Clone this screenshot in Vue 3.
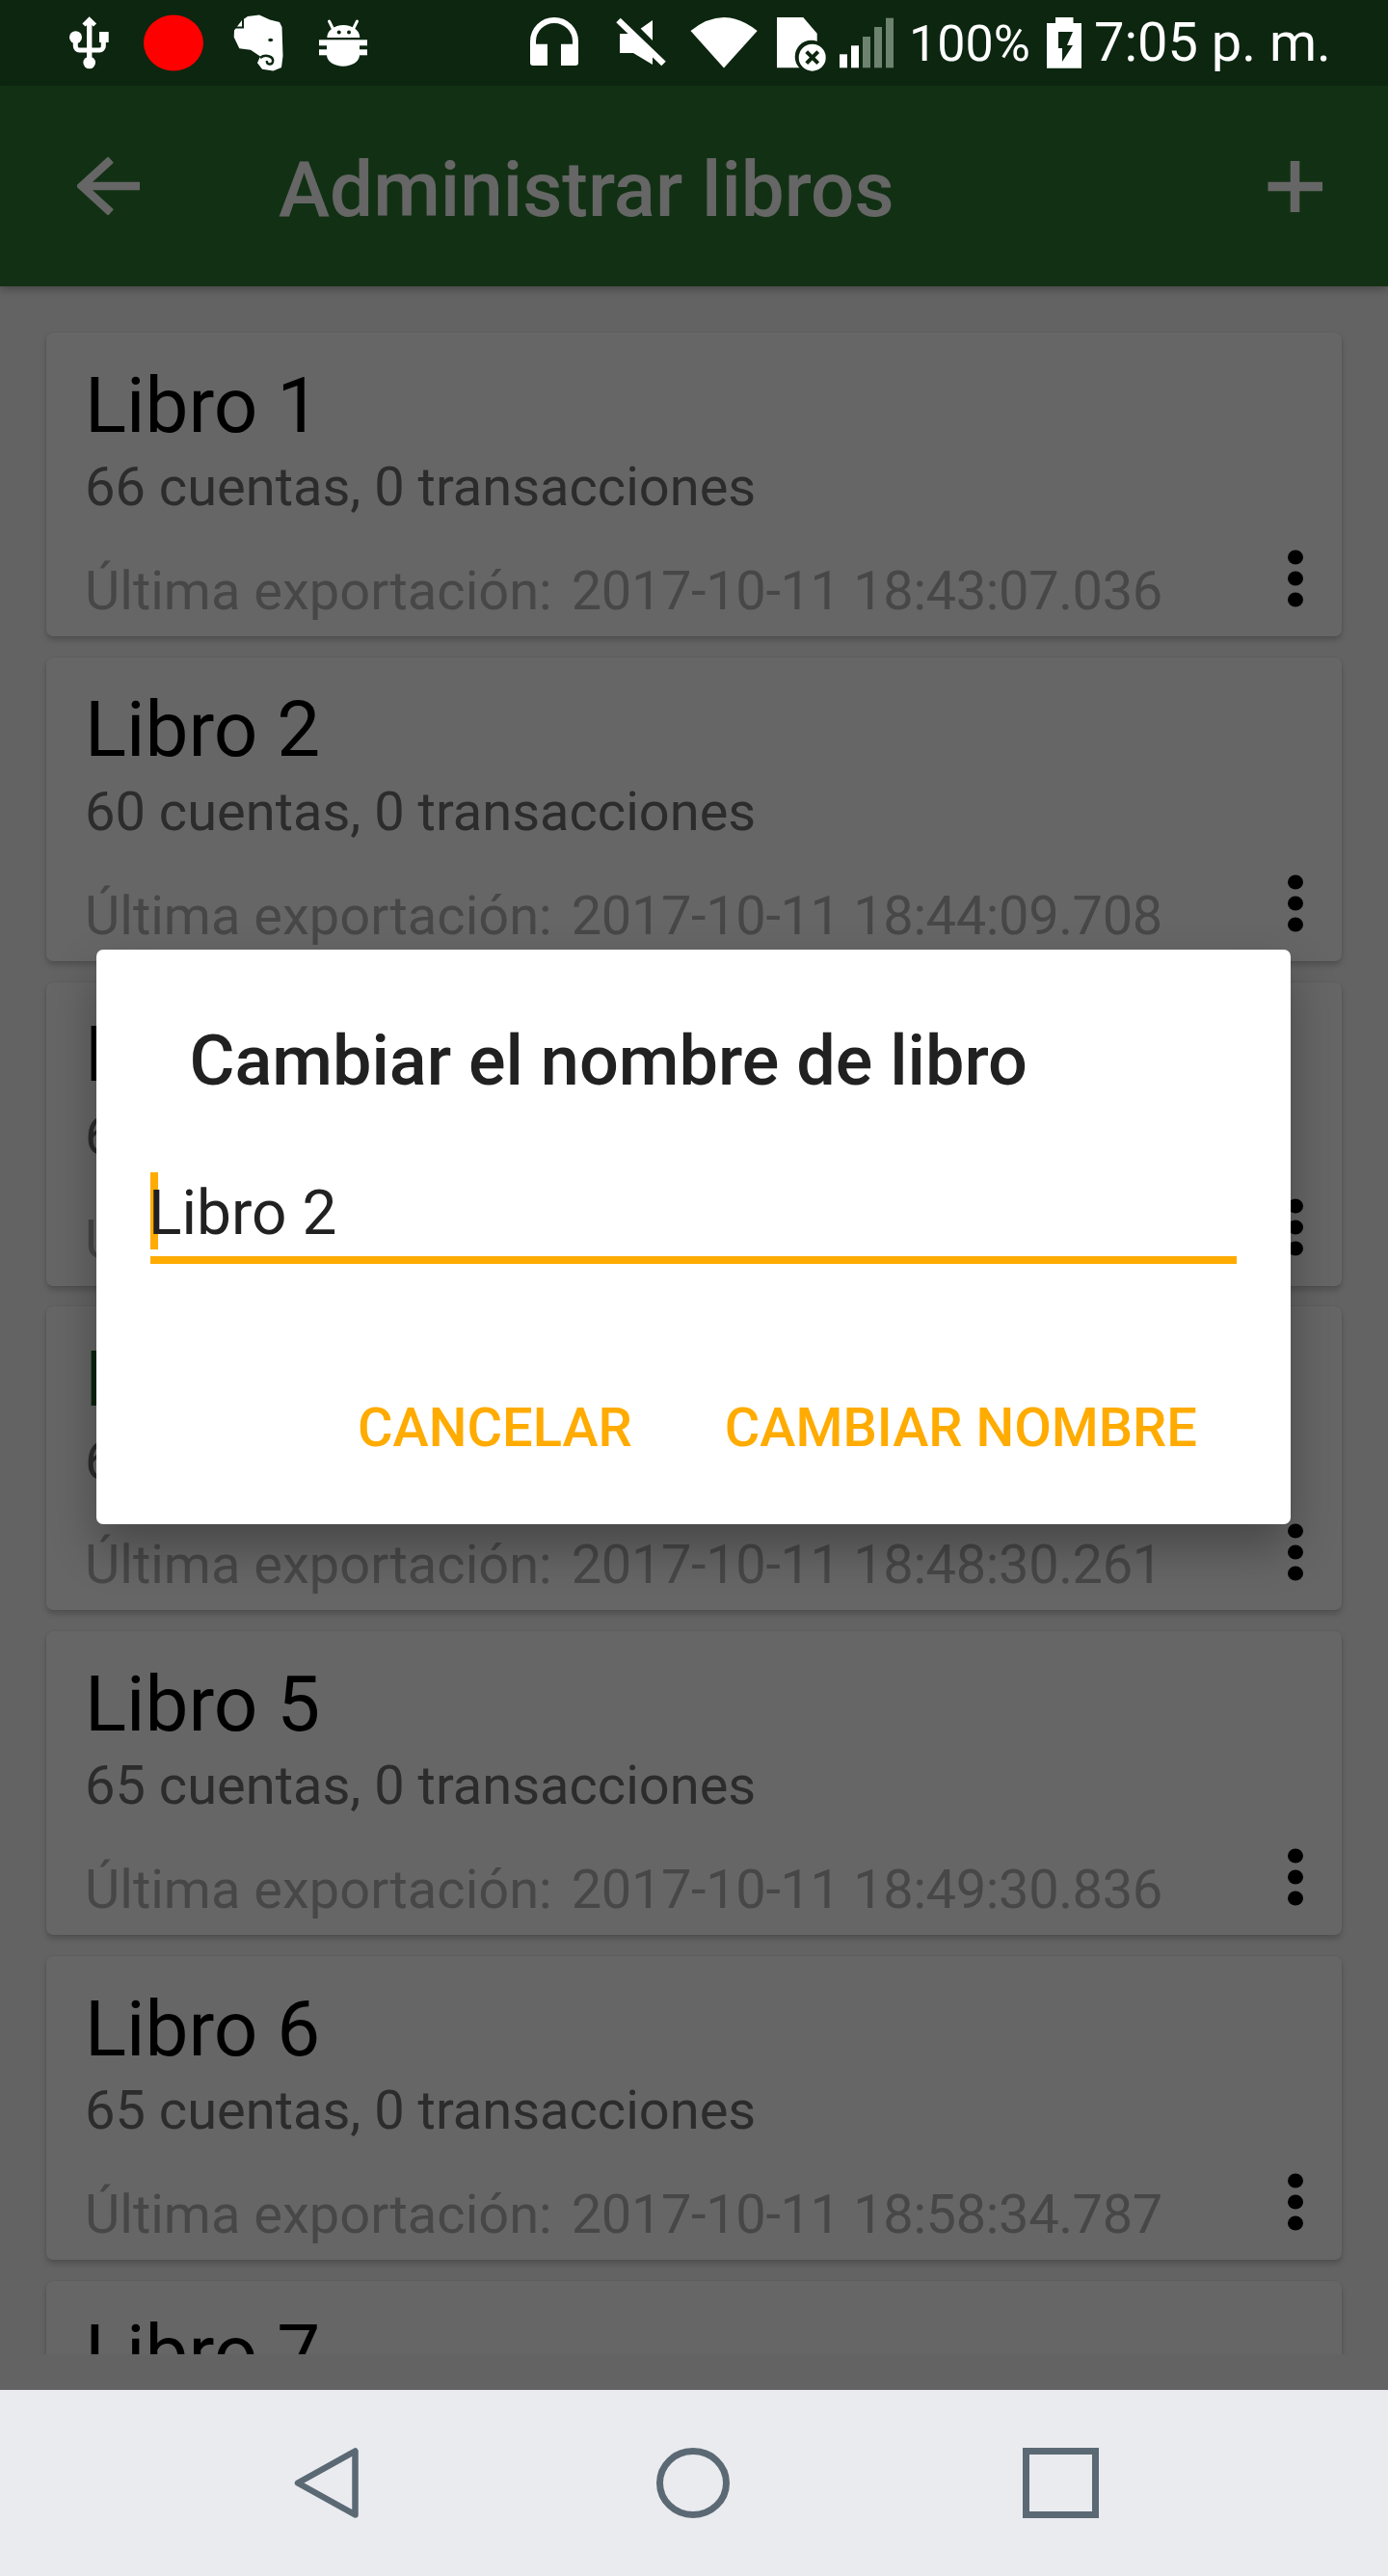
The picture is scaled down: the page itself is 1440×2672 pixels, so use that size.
<template>
  <div class="phone">
    <!-- Status bar -->
    <div class="status-bar">
      <div class="status-left">
        <svg class="usb" width="41" height="89" viewBox="72 0 41 89">
          <path d="M87 26l5.700-5.700 5.800 5.700" fill="none" stroke="#fff" stroke-width="4.500" />
          <rect x="90" y="20" width="5.400" height="40" fill="#fff" />
          <path d="M78.300 40v8a4 4 0 0 0 4 4h21a4 4 0 0 0 4-4v-6" fill="none" stroke="#fff" stroke-width="5" />
          <circle cx="78.500" cy="38.700" r="6.500" fill="#fff" />
          <rect x="103" y="33" width="9.700" height="11" fill="#fff" />
          <circle cx="92.700" cy="65" r="6.300" fill="#fff" />
        </svg>
        <svg class="rec" width="62" height="89" viewBox="149 0 62 89">
          <ellipse cx="180" cy="44.500" rx="31" ry="29" fill="#f00" />
        </svg>
        <svg class="evernote" width="52" height="89" viewBox="242 0 52 89">
          <path d="M251 21l6-4 12-1.500 11 5 10 2.500 2.500 5 1 30-1.500 12-8.500 3.500-11.500-1.700-5-6.600 3-6.700-10-6.700-11.700-1.600-5.600-11.700.3-7z" fill="#fff" />
          <path d="M252 20v8.500h-8" fill="none" stroke="#0c2610" stroke-width="2" />
          <ellipse cx="280.700" cy="41.500" rx="2.500" ry="1.800" fill="#0c2610" />
          <path d="M270 60c5-4 14-2 13 4-1 4-7 3-6-1" fill="none" stroke="#0c2610" stroke-width="2.500" />
        </svg>
        <svg class="android" width="50" height="89" viewBox="331 0 50 89">
          <path d="M339.300 39a17 13 0 0 1 34 0z" fill="#fff" />
          <path d="M345 29l-3.500-7M367 29l3.500-7" stroke="#fff" stroke-width="3" stroke-linecap="round" />
          <circle cx="351.700" cy="33.500" r="2" fill="#0c2610" />
          <circle cx="362" cy="33.500" r="2" fill="#0c2610" />
          <rect x="331" y="41.300" width="50" height="6" fill="#fff" />
          <rect x="331" y="51.300" width="50" height="6" fill="#fff" />
          <path d="M339 47h34v10c0 7-8 11.700-17 11.700S339 64 339 57z" fill="#fff" />
        </svg>
      </div>
      <div class="status-right">
        <svg class="headphones" width="50" height="89" viewBox="550 0 50 89">
          <path d="M553 52v-9a22 22 0 0 1 44 0v9" fill="none" stroke="#fff" stroke-width="6" />
          <path d="M550 45.700h18V68h-15a3 3 0 0 1-3-3zM582 45.700h18V65a3 3 0 0 1-3 3h-15z" fill="#fff" />
        </svg>
        <svg class="mute" width="52" height="89" viewBox="639 0 52 89">
          <path d="M643 35h14l20-14v46l-20-12h-14z" fill="#fff" />
          <path d="M643 19l47 47" stroke="#0c2610" stroke-width="7" transform="translate(3 -3)" />
          <path d="M641.500 21l47 45" stroke="#fff" stroke-width="6.500" />
        </svg>
        <svg class="wifi" width="70" height="89" viewBox="716 0 70 89">
          <path d="M751 70.500L716.500 32Q751 4 785.700 32z" fill="#fff" />
        </svg>
        <svg class="sim" width="52" height="89" viewBox="806 0 52 89">
          <path d="M806 18h27.300l14.400 16.700v35.600H806z" fill="#fff" />
          <circle cx="841.700" cy="58.700" r="17" fill="#0c2610" />
          <circle cx="842.700" cy="59.700" r="14" fill="#fff" />
          <path d="M836.700 53.700l12 12m0-12l-12 12" stroke="#0c2610" stroke-width="4" />
        </svg>
        <svg class="signal" width="56" height="89" viewBox="871 0 56 89">
          <rect x="871" y="56.300" width="8" height="14" fill="#fff" />
          <rect x="883" y="47.300" width="8" height="23" fill="#fff" />
          <rect x="895" y="38" width="8" height="32.300" fill="#6e8270" />
          <rect x="907" y="28" width="8" height="42.300" fill="#6e8270" />
          <rect x="919" y="18.700" width="8" height="51.600" fill="#6e8270" />
        </svg>
        <span class="battery-text">100%</span>
        <svg class="battery" width="36" height="89" viewBox="1086 0 36 89">
          <path d="M1095 18h18.500v6h8.500v46.700h-36V24h9z" fill="#fff" />
          <path d="M1098 33h15l-6 14h6l-11 17V50h-4z" fill="#0c2610" />
        </svg>
        <span class="clock">7:05 p. m.</span>
      </div>
    </div>

    <!-- App bar -->
    <header class="app-bar">
      <svg class="back" width="66" height="60" viewBox="80 163 66 60">
        <path d="M145 193H86M115 165.500L85 193l30 27.500" fill="none" stroke="#fff" stroke-width="8.500" />
      </svg>
      <span class="app-title">Administrar libros</span>
      <svg class="add" width="57" height="53" viewBox="1315 166.500 57 53">
        <path d="M1343.500 166.500v53M1315.500 193h56.500" fill="none" stroke="#fff" stroke-width="9.500" />
      </svg>
    </header>

    <!-- Book list -->
    <main class="book-list">
      <article v-for="book in books" :key="book.name" class="book-card">
        <h2 class="book-name" :class="{ active: book.active }">{{ book.name }}</h2>
        <p class="book-stats">{{ book.accounts }} cuentas, 0 transacciones</p>
        <div class="book-footer">
          <span class="book-export">
            <span>Última exportación:</span>
            <span class="book-date">{{ book.exported }}</span>
          </span>
          <svg class="kebab" width="16" height="60" viewBox="0 0 16 60">
            <ellipse cx="8" cy="8" rx="8" ry="7.500" />
            <ellipse cx="8" cy="30" rx="8" ry="7.500" />
            <ellipse cx="8" cy="52" rx="8" ry="7.500" />
          </svg>
        </div>
      </article>
    </main>

    <div class="list-gap"></div>

    <!-- Navigation bar -->
    <nav class="nav-bar">
      <svg class="nav-back" width="67" height="73" viewBox="0 0 67 73">
        <path d="M63.500 3.500v66L4 36.500z" fill="none" stroke="#5b6974" stroke-width="6.500" stroke-linejoin="round" />
      </svg>
      <svg class="nav-home" width="76" height="73" viewBox="0 0 76 73">
        <ellipse cx="38" cy="36.500" rx="34.500" ry="33" fill="none" stroke="#5b6974" stroke-width="7" />
      </svg>
      <svg class="nav-recent" width="79" height="73" viewBox="0 0 79 73">
        <rect x="3.500" y="3.500" width="72" height="66" fill="none" stroke="#5b6974" stroke-width="7" />
      </svg>
    </nav>

    <!-- Rename dialog -->
    <div class="scrim">
      <div class="dialog">
        <h3 class="dialog-title">Cambiar el nombre de libro</h3>
        <div class="dialog-input">
          <span class="caret"></span>
          <span class="input-value">Libro 2</span>
        </div>
        <div class="dialog-actions">
          <span class="action">CANCELAR</span>
          <span class="action">CAMBIAR NOMBRE</span>
        </div>
      </div>
    </div>
  </div>
</template>

<script setup>
// Books shown behind the dialog
const books = [
  { name: 'Libro 1', accounts: 66, exported: '2017-10-11 18:43:07.036' },
  { name: 'Libro 2', accounts: 60, exported: '2017-10-11 18:44:09.708' },
  { name: 'Libro 3', accounts: 64, exported: '2017-10-11 18:46:12.402' },
  { name: 'Libro 4', accounts: 65, exported: '2017-10-11 18:48:30.261', active: true },
  { name: 'Libro 5', accounts: 65, exported: '2017-10-11 18:49:30.836' },
  { name: 'Libro 6', accounts: 65, exported: '2017-10-11 18:58:34.787' },
  { name: 'Libro 7', accounts: 65, exported: '2017-10-11 19:01:12.118' },
];
</script>

<style>
body {
  background: #fff;
}
</style>

<style scoped>
.phone {
  position: relative;
  width: 1440px;
  height: 2672px;
  display: flex;
  flex-direction: column;
  overflow: hidden;
  background: #f8f8f8;
  font-family: Roboto, "Liberation Sans", sans-serif;
}

.status-bar {
  height: 89px;
  flex: none;
  display: flex;
  padding-left: 72px;
  box-sizing: border-box;
  background: #0c2610;
  color: #fff;
}

.status-left,
.status-right {
  display: flex;
  align-items: flex-start;
}

.status-right {
  margin-left: 169px;
}

.rec {
  margin-left: 36px;
}
.evernote {
  margin-left: 31px;
}
.android {
  margin-left: 37px;
}
.mute {
  margin-left: 39px;
}
.wifi {
  margin-left: 25px;
}
.sim {
  margin-left: 20px;
}
.signal {
  margin-left: 13px;
}
.battery-text {
  margin-left: 16px;
  width: 143px;
  font-size: 52px;
  line-height: 89px;
  position: relative;
  top: 1px;
}
.battery {
  flex: none;
}
.clock {
  margin-left: 13px;
  font-size: 56px;
  line-height: 89px;
  white-space: nowrap;
}

.app-bar {
  position: relative;
  z-index: 1;
  height: 208px;
  flex: none;
  display: flex;
  align-items: center;
  padding: 0 68px 0 80px;
  box-sizing: border-box;
  background: #2e7a32;
  box-shadow: 0 4px 8px rgba(0, 0, 0, 0.25);
  color: #fff;
}

.back {
  flex: none;
}

.app-title {
  margin-left: 143px;
  padding-top: 8px;
  flex: 1;
  font-size: 80px;
  font-weight: 500;
}

.book-list {
  height: 2145px;
  flex: none;
  overflow: hidden;
  padding: 48px 48px 0;
  box-sizing: border-box;
  display: flex;
  flex-direction: column;
  gap: 21.800px;
}

.book-card {
  flex: none;
  height: 315px;
  padding: 34.600px 40px 0 40px;
  box-sizing: border-box;
  background: #fff;
  border-radius: 7px;
  box-shadow: 0 4px 6px rgba(0, 0, 0, 0.2), 0 0 2px rgba(0, 0, 0, 0.12);
}

.book-name {
  margin: 0;
  font-size: 80px;
  font-weight: 400;
  line-height: 82px;
  color: #000;
}

.book-name.active {
  color: #1b5e20;
}

.book-stats {
  margin: 14.200px 0 0;
  font-size: 56px;
  line-height: 58px;
  color: #6e6e6e;
}

.book-footer {
  margin-top: 50px;
  height: 58px;
  display: flex;
  justify-content: space-between;
  align-items: flex-start;
}

.book-export {
  display: flex;
  gap: 20px;
  font-size: 56px;
  line-height: 58px;
  color: #b2b2b2;
}

.book-date {
  letter-spacing: -0.370px;
}

.kebab {
  flex: none;
  margin-top: -14px;
  fill: #000;
}

.list-gap {
  height: 37px;
  flex: none;
}

.nav-bar {
  height: 193px;
  flex: none;
  display: flex;
  align-items: center;
  padding-left: 305px;
  background: #eaebef;
  position: relative;
  z-index: 3;
}

.nav-home {
  margin-left: 309px;
}

.nav-recent {
  margin-left: 304px;
}

.scrim {
  position: absolute;
  z-index: 2;
  top: 89px;
  left: 0;
  right: 0;
  height: 2390px;
  background: rgba(0, 0, 0, 0.6);
}

.dialog {
  position: absolute;
  top: 896px;
  left: 100px;
  width: 1239px;
  height: 596px;
  padding: 75.400px 56px 0;
  box-sizing: border-box;
  background: #fff;
  border-radius: 7px;
  box-shadow: 0 24px 48px rgba(0, 0, 0, 0.3);
}

.dialog-title {
  margin: 0 0 0 40.500px;
  font-size: 72px;
  font-weight: 500;
  line-height: 82px;
  color: #212121;
}

.dialog-input {
  position: relative;
  margin-top: 84.600px;
  height: 76px;
  border-bottom: 8px solid #ffab00;
}

.caret {
  position: absolute;
  left: 0;
  top: -11px;
  width: 8px;
  height: 80px;
  background: #ffab00;
}

.input-value {
  position: relative;
  display: block;
  margin-left: -2px;
  font-size: 64px;
  line-height: 64px;
  color: #212121;
}

.dialog-actions {
  margin-top: 140.800px;
  padding-right: 41px;
  display: flex;
  justify-content: flex-end;
  gap: 96px;
}

.action {
  font-size: 56px;
  font-weight: 500;
  line-height: 58px;
  color: #ffab00;
}
</style>
